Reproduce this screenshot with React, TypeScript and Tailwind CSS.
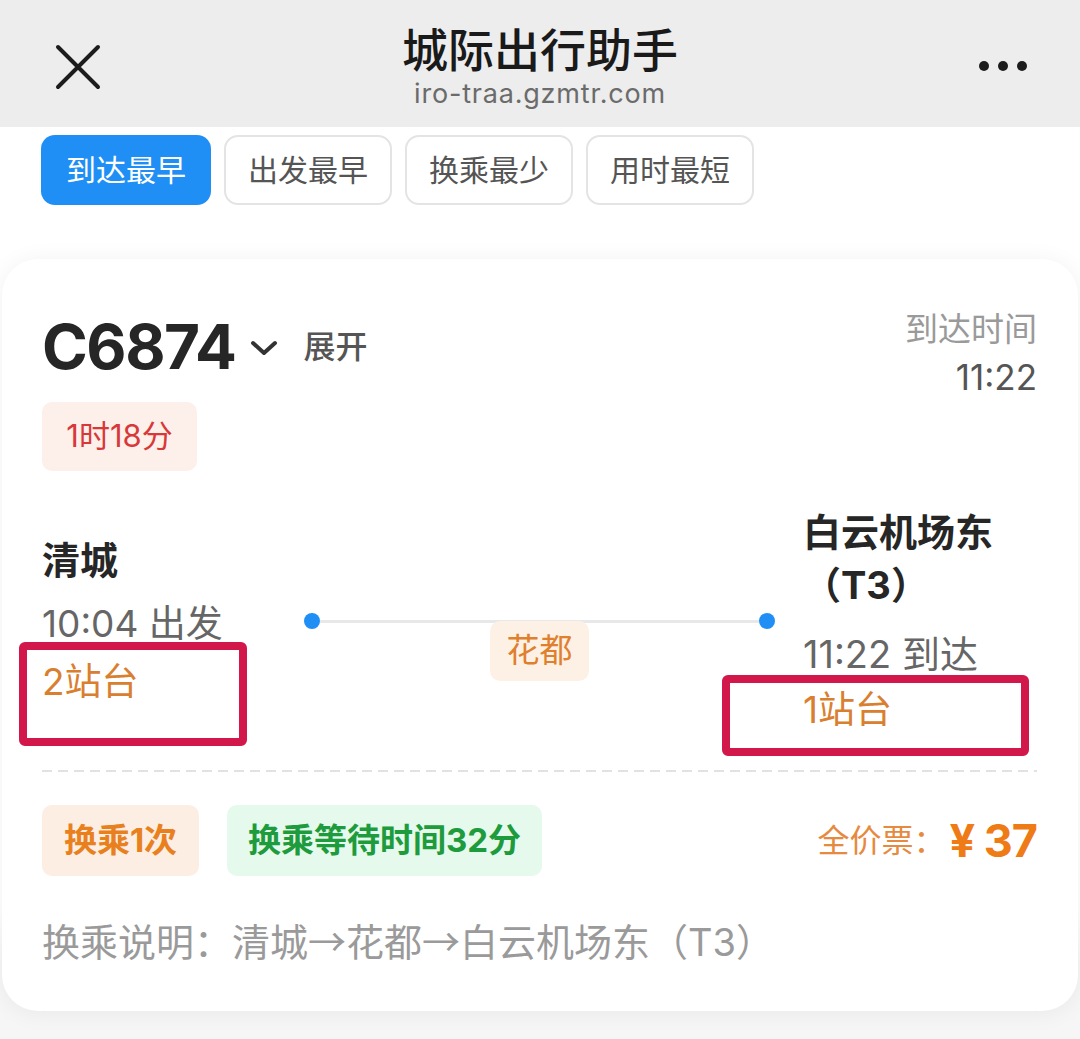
import React from "react";

const Tab = ({ label, active }: { label: string; active?: boolean }) => (
  <div
    className={
      active
        ? "h-[70px] w-[170px] rounded-[14px] bg-[#1f8ff5] text-white flex items-center justify-center text-[30px]"
        : "h-[70px] w-[168px] rounded-[14px] bg-white border-2 border-[#e4e4e4] text-[#555] flex items-center justify-center text-[30px]"
    }
  >
    {label}
  </div>
);

const Arrow = () => <span className="font-['Noto_Sans_CJK_SC',sans-serif]">→</span>;

const App = () => {
  return (
    <div className="w-[1080px] h-[1039px] bg-white overflow-hidden flex flex-col font-['Inter','Noto_Sans_CJK_SC',sans-serif]">
      {/* Top bar */}
      <header className="h-[127px] shrink-0 bg-[#ededed] grid grid-cols-[1fr_auto_1fr] items-start">
        <div className="pl-[55px] pt-[44px]">
          <svg width="46" height="46" viewBox="0 0 46 46">
            <path d="M3 3 L43 43 M43 3 L3 43" stroke="#1c1c1c" strokeWidth="4" strokeLinecap="round" />
          </svg>
        </div>
        <div className="pt-[22px] flex flex-col items-center">
          <div className="text-[46px] leading-[56px] font-medium text-[#1a1a1a]">城际出行助手</div>
          <div className="text-[27px] leading-[32px] text-[#6b6b6b] tracking-[0.8px]">iro-traa.gzmtr.com</div>
        </div>
        <div className="flex justify-end gap-[9px] pr-[53px] pt-[61px]">
          <span className="w-[10px] h-[10px] rounded-full bg-[#1c1c1c]" />
          <span className="w-[10px] h-[10px] rounded-full bg-[#1c1c1c]" />
          <span className="w-[10px] h-[10px] rounded-full bg-[#1c1c1c]" />
        </div>
      </header>

      {/* Sort tabs */}
      <div className="pt-[8px] pl-[41px] flex gap-[13px]">
        <Tab label="到达最早" active />
        <Tab label="出发最早" />
        <Tab label="换乘最少" />
        <Tab label="用时最短" />
      </div>

      <div className="flex-1 bg-[linear-gradient(to_bottom,#ffffff_0,#ffffff_700px,#f6f6f6_760px)] pt-[54px]">
        {/* Train card */}
        <div className="relative mx-[2px] rounded-[36px] bg-white shadow-[0_2px_24px_rgba(0,0,0,0.06)] pt-[50px] pl-[40px] pr-[41px] pb-[45px]">
          <div className="flex justify-between">
            <div>
              <div className="h-[76px] flex items-center">
                <span className="text-[62px] font-bold text-[#262626] tracking-[-1.5px] leading-none">C6874</span>
                <svg className="ml-[15px] mt-[2px]" width="28" height="20" viewBox="0 0 28 20">
                  <polyline points="3,5 14,15 25,5" fill="none" stroke="#333" strokeWidth="4" strokeLinecap="round" strokeLinejoin="round" />
                </svg>
                <span className="ml-[25px] text-[32px] font-medium text-[#555]">展开</span>
              </div>
              <div className="mt-[17px] h-[69px] w-[155px] rounded-[10px] bg-[#fdf0ea] text-[#d8383a] text-[31px] flex items-center justify-center">
                1时18分
              </div>
            </div>
            <div className="text-right">
              <div className="text-[33px] leading-[40px] text-[#9a9a9a]">到达时间</div>
              <div className="mt-[6px] text-[35px] leading-[44px] text-[#555]">11:22</div>
            </div>
          </div>

          {/* Stations */}
          <div className="h-[299px] flex">
            <div className="w-[262px] pt-[65px]">
              <div className="text-[38px] leading-[49px] font-bold text-[#262626]">清城</div>
              <div className="mt-[15px] text-[37px] leading-[48px] text-[#666]">10:04 出发</div>
              <div className="mt-[12px] text-[37px] leading-[44px] text-[#d98030]">2站台</div>
            </div>
            <div className="w-[471px] pt-[142px] flex flex-col items-center">
              <div className="w-full h-[16px] flex items-center">
                <span className="w-[16px] h-[16px] rounded-full bg-[#1f8ff5] shrink-0" />
                <span className="flex-1 h-[3px] bg-[#e8e8e8]" />
                <span className="w-[16px] h-[16px] rounded-full bg-[#1f8ff5] shrink-0" />
              </div>
              <div className="-mt-[8px] h-[60px] w-[99px] rounded-[10px] bg-[#fdf1e6] text-[#e07f2c] text-[33px] flex items-center justify-center">
                花都
              </div>
            </div>
            <div className="ml-[28px] pt-[35px]">
              <div className="text-[38px] leading-[53px] font-bold text-[#262626]">
                白云机场东
                <br />
                （T3）
              </div>
              <div className="mt-[18px] text-[38px] leading-[48px] text-[#666]">11:22 到达</div>
              <div className="mt-[10px] text-[37px] leading-[44px] text-[#d98030]">1站台</div>
            </div>
          </div>

          <div className="h-[2px] bg-[repeating-linear-gradient(90deg,#e2e2e2_0,#e2e2e2_10px,transparent_10px,transparent_16px)]" />

          {/* Transfer info */}
          <div className="mt-[33px] flex items-center">
            <div className="h-[71px] w-[157px] rounded-[10px] bg-[#fdeee4] text-[#e8801e] text-[33px] font-bold flex items-center justify-center">
              换乘1次
            </div>
            <div className="ml-[28px] h-[71px] w-[315px] rounded-[10px] bg-[#e5f9ec] text-[#1e9b3c] text-[33px] font-bold flex items-center justify-center">
              换乘等待时间32分
            </div>
            <div className="ml-auto flex items-center">
              <span className="text-[32px] text-[#e68a3f]">全价票：</span>
              <span className="ml-[4px] text-[45px] font-bold text-[#ef7b16] tracking-[-1px]">¥ 37</span>
            </div>
          </div>

          <div className="mt-[40px] text-[38px] leading-[48px] text-[#9a9a9a]">
            换乘说明：清城<Arrow />花都<Arrow />白云机场东（T3）
          </div>

          {/* Annotation boxes */}
          <div className="absolute left-[17px] top-[383px] w-[228px] h-[104px] border-[8px] border-[#d2174a] rounded-[6px]" />
          <div className="absolute left-[720px] top-[416px] w-[307px] h-[81px] border-[8px] border-[#d2174a] rounded-[6px]" />
        </div>
      </div>
    </div>
  );
};

export default App;
